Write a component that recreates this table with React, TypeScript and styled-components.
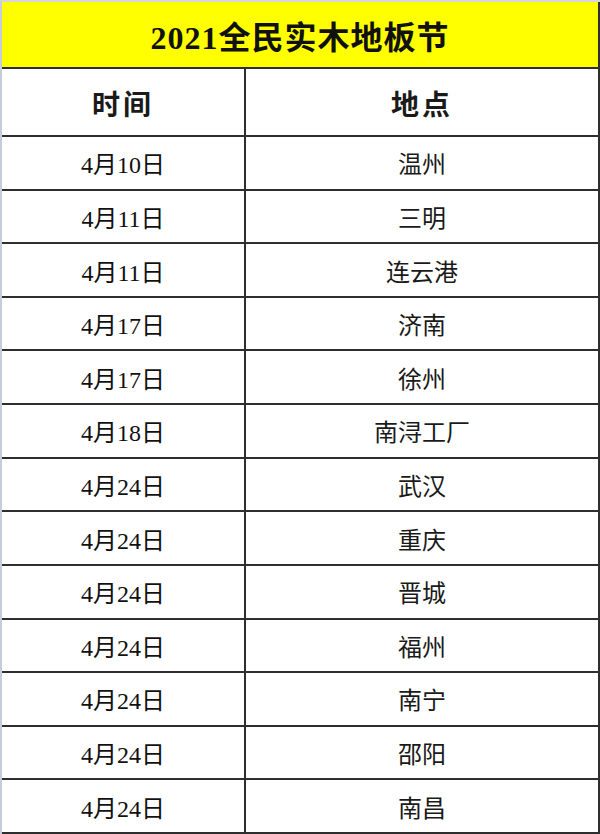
import React from "react";
import styled, { createGlobalStyle } from "styled-components";

type Stop = { date: string; city: string };

const stops: Stop[] = [
  { date: "4月10日", city: "温州" },
  { date: "4月11日", city: "三明" },
  { date: "4月11日", city: "连云港" },
  { date: "4月17日", city: "济南" },
  { date: "4月17日", city: "徐州" },
  { date: "4月18日", city: "南浔工厂" },
  { date: "4月24日", city: "武汉" },
  { date: "4月24日", city: "重庆" },
  { date: "4月24日", city: "晋城" },
  { date: "4月24日", city: "福州" },
  { date: "4月24日", city: "南宁" },
  { date: "4月24日", city: "邵阳" },
  { date: "4月24日", city: "南昌" },
];

const App = () => {
  return (
    <>
      <GlobalStyle />
      <Sheet>
        <Title>2021全民实木地板节</Title>
        <Grid>
          <HeadCell>时间</HeadCell>
          <HeadCell>地点</HeadCell>
          {stops.map((s, i) => (
            <React.Fragment key={i}>
              <DateCell>{s.date}</DateCell>
              <CityCell>{s.city}</CityCell>
            </React.Fragment>
          ))}
        </Grid>
      </Sheet>
    </>
  );
};

export default App;

const GlobalStyle = createGlobalStyle`
  html, body {
    margin: 0;
    padding: 0;
    background: #ffffff;
  }
`;

const Sheet = styled.div`
  display: flex;
  flex-direction: column;
  width: 600px;
  height: 834px;
  box-sizing: border-box;
  border-top: 2px solid #d6d6d6;
  border-left: 2px solid #c5cddc;
  background: #ffffff;
`;

const Title = styled.div`
  display: flex;
  justify-content: center;
  align-items: center;
  height: 65px;
  flex-shrink: 0;
  background: #ffff00;
  border-right: 2px solid #2e2e2e;
  border-bottom: 2px solid #2e2e2e;
  font-family: "Liberation Serif", "Noto Sans CJK SC", serif;
  font-size: 32px;
  font-weight: 700;
  letter-spacing: 1px;
  color: #111111;
`;

const Grid = styled.div`
  flex: 1;
  display: grid;
  grid-template-columns: 242px 1fr;
  grid-template-rows: 66px repeat(13, 1fr);
  gap: 2px;
  background: #2e2e2e;
  border-right: 2px solid #2e2e2e;
  border-bottom: 2px solid #2e2e2e;
`;

const Cell = styled.div`
  display: flex;
  justify-content: center;
  align-items: center;
  background: #ffffff;
  color: #1a1a1a;
`;

const HeadCell = styled(Cell)`
  font-family: "Noto Sans CJK SC", sans-serif;
  font-size: 28px;
  font-weight: 700;
  letter-spacing: 3px;
  padding-top: 2px;
`;

const DateCell = styled(Cell)`
  font-family: "Liberation Serif", "Noto Sans CJK SC", serif;
  font-size: 24px;
  color: #111111;
`;

const CityCell = styled(Cell)`
  font-family: "Noto Sans CJK SC", sans-serif;
  font-size: 24px;
`;
